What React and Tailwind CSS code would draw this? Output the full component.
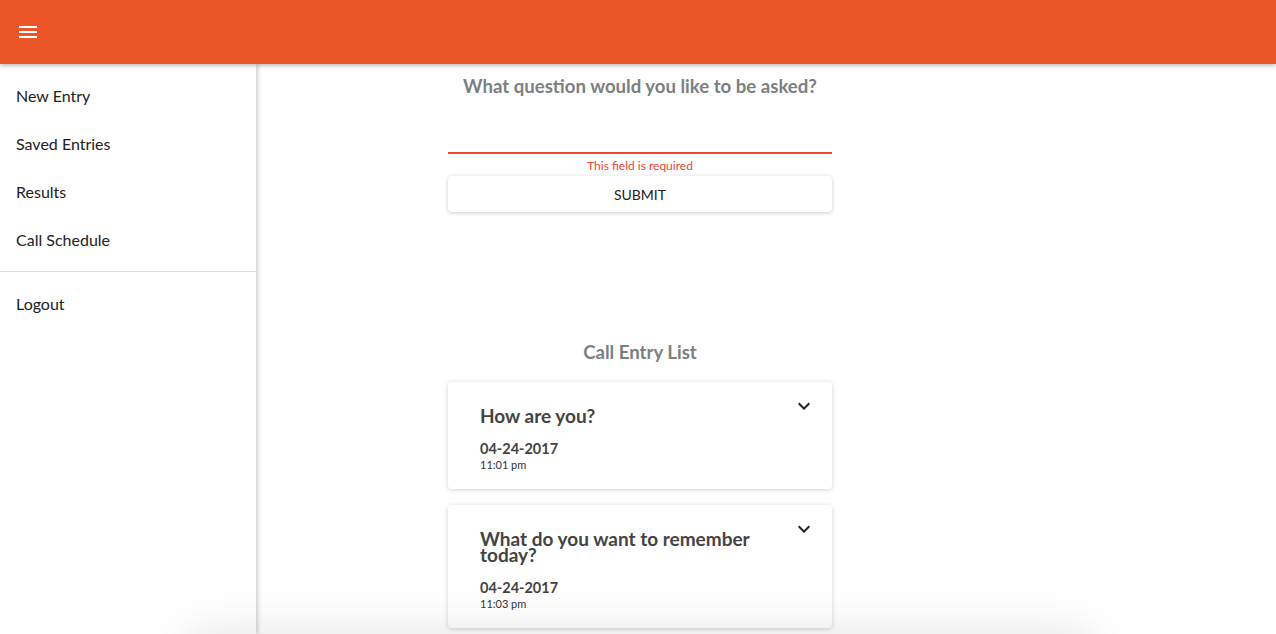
import React from 'react';

const entries = [
  { q: 'How are you?', date: '04-24-2017', time: '11:01 pm' },
  { q: 'What do you want to remember today?', date: '04-24-2017', time: '11:03 pm' },
];

function Chevron() {
  return (
    <svg width="24" height="24" viewBox="0 0 24 24" className="shrink-0">
      <path d="M16.59 8.59 12 13.17 7.41 8.59 6 10l6 6 6-6z" fill="#222" />
    </svg>
  );
}

export default function App() {
  return (
    <div className="relative h-[634px] overflow-hidden bg-white font-['Lato','Noto_Sans',sans-serif]">
      {/* App bar */}
      <header className="relative z-20 h-16 bg-[#eb5528] flex items-center px-4 shadow-[0_2px_4px_rgba(0,0,0,0.25)]">
        <svg width="24" height="24" viewBox="0 0 24 24">
          <path d="M3 18h18v-2H3v2zm0-5h18v-2H3v2zm0-7v2h18V6H3z" fill="#fff" />
        </svg>
      </header>

      {/* Drawer */}
      <aside className="absolute left-0 top-16 bottom-0 z-10 w-64 bg-white shadow-[2px_0_4px_rgba(0,0,0,0.18)] text-[16px] text-[#222]">
        <ul className="pt-2">
          {['New Entry', 'Saved Entries', 'Results', 'Call Schedule'].map(t => (
            <li key={t} className="h-12 flex items-center px-4">{t}</li>
          ))}
        </ul>
        <div className="border-t border-[#e0e0e0] mt-[7px]" />
        <ul className="pt-2">
          <li className="h-12 flex items-center px-4">Logout</li>
        </ul>
      </aside>

      {/* Main */}
      <div className="flex justify-center pl-1">
        <main className="w-[384px] flex flex-col items-stretch">
          <h2 className="text-center font-bold text-[18.6px] text-[#7b8083] mt-[12px] leading-[20px]">
            What question would you like to be asked?
          </h2>
          <div className="mt-[56px] border-b-2 border-[#f44336]" />
          <p className="text-center text-[12px] text-[#f44336] mt-[5px] leading-[14px]">This field is required</p>
          <button className="mt-[3px] h-9 bg-white rounded-sm text-[14px] text-[#222] shadow-[0_1px_4px_rgba(0,0,0,0.2)]">
            SUBMIT
          </button>

          <h2 className="text-center font-bold text-[18.6px] text-[#7b8083] mt-[130px] leading-[20px]">
            Call Entry List
          </h2>
          <div className="mt-[20px] flex flex-col gap-4">
            {entries.map(e => (
              <div key={e.time} className="bg-white rounded-sm shadow-[0_1px_5px_rgba(0,0,0,0.18)] flex justify-between pl-8 pr-4 pt-[26px] pb-[17px]">
                <div className="w-[300px]">
                  <div className="font-bold text-[19px] leading-[16px] text-[#444]">{e.q}</div>
                  <div className="mt-[15px] font-bold text-[14.5px] leading-[19px] text-[#444]">{e.date}</div>
                  <div className="text-[11px] leading-[14px] text-[#333]">{e.time}</div>
                </div>
                <div className="-mt-[14px]"><Chevron /></div>
              </div>
            ))}
          </div>
        </main>
      </div>

      {/* Bottom sheet shadow peeking from below */}
      <div className="pointer-events-none absolute z-30 left-[190px] w-[900px] top-[634px] h-10 rounded-full shadow-[0_0_40px_10px_rgba(0,0,0,0.08)]" />
    </div>
  );
}
